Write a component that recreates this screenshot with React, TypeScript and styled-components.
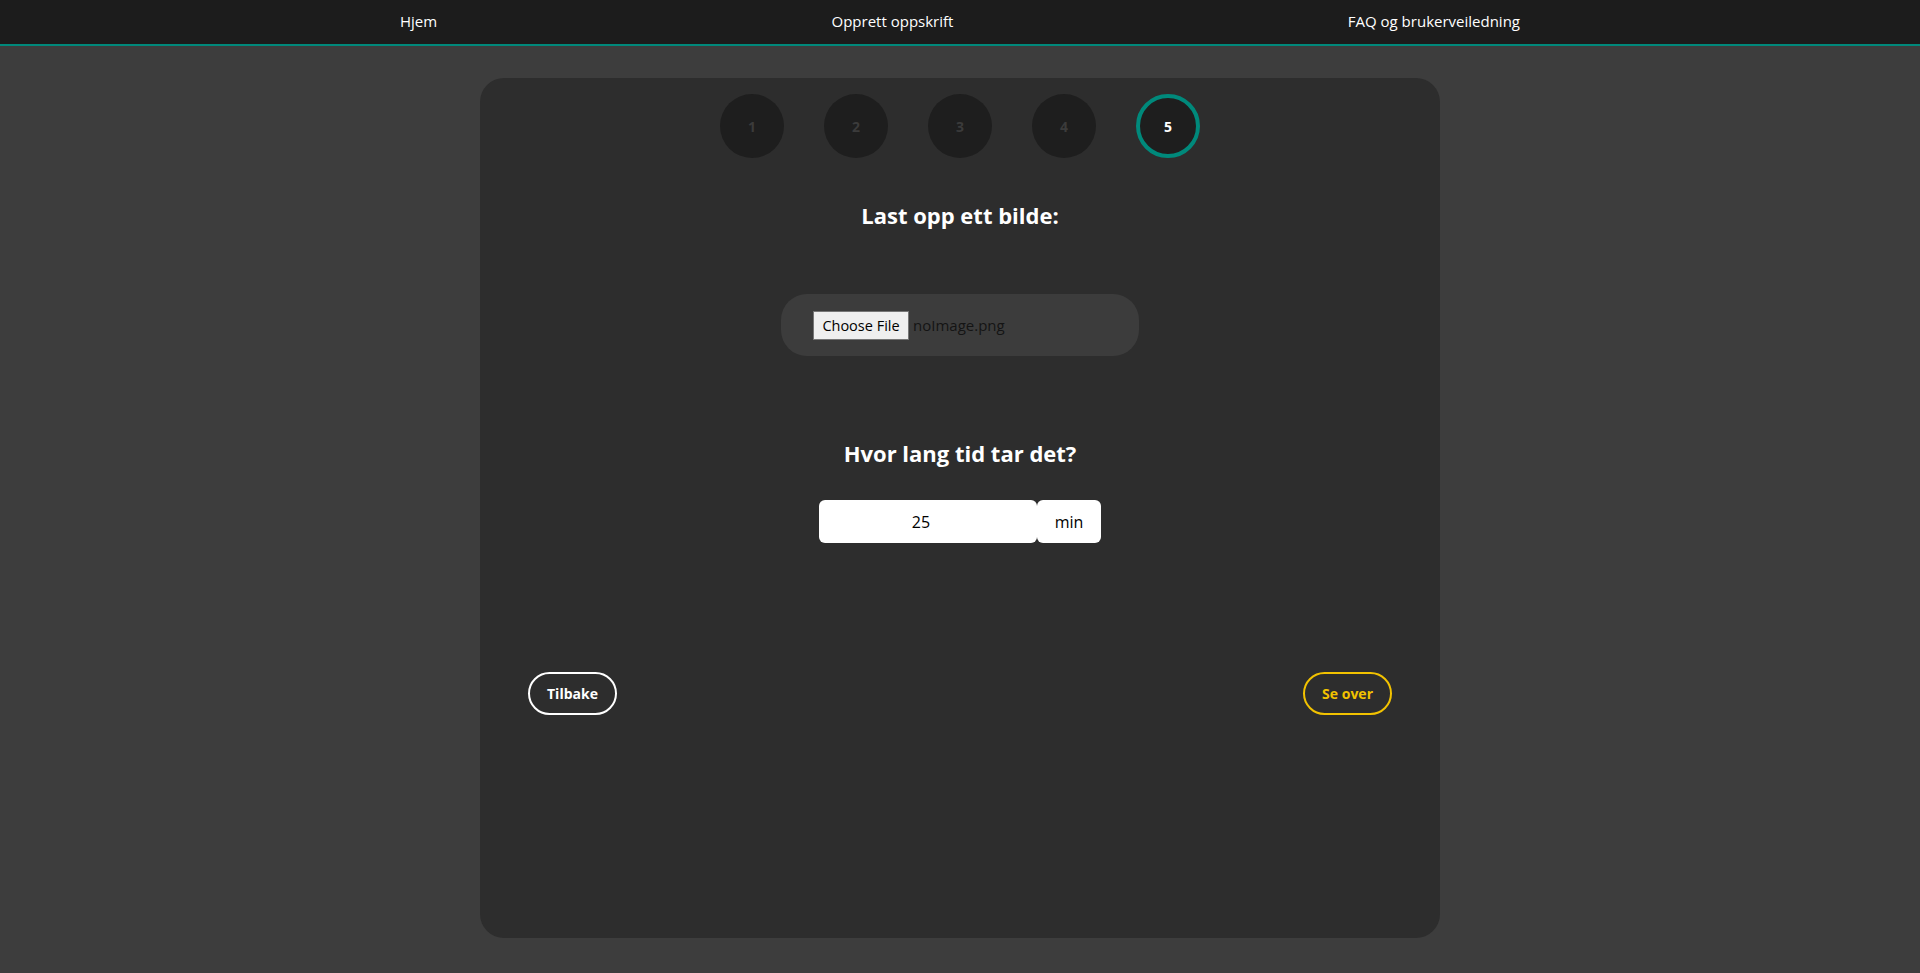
import React from "react";
import styled, { createGlobalStyle } from "styled-components";

const Global = createGlobalStyle`
  html, body { margin: 0; padding: 0; }
  body {
    background: #3d3d3d;
    font-family: "Open Sans", "Noto Sans", sans-serif;
    color: #fff;
    min-height: 973px;
  }
  * { box-sizing: border-box; }
`;

const Nav = styled.nav`
  height: 46px;
  background: #1c1c1c;
  border-bottom: 2px solid #00897b;
  display: flex;
  align-items: center;
  justify-content: space-between;
  padding: 0 400px;
`;

const NavLink = styled.a`
  color: #fff;
  font-size: 15px;
  text-decoration: none;
  line-height: 20px;
  margin-top: -2px;
`;

const Main = styled.main`
  display: flex;
  justify-content: center;
  padding-top: 32px;
`;

const Card = styled.section`
  width: 960px;
  height: 860px;
  background: #2d2d2d;
  border-radius: 24px;
  padding: 16px 48px;
  display: flex;
  flex-direction: column;
  align-items: center;
`;

const Steps = styled.div`
  display: flex;
  gap: 40px;
`;

const Step = styled.div<{ $active?: boolean }>`
  width: 64px;
  height: 64px;
  border-radius: 50%;
  background: #1e1e1e;
  border: ${(p) => (p.$active ? "4px solid #00897b" : "none")};
  color: ${(p) => (p.$active ? "#fff" : "#3b3b3b")};
  font-weight: 700;
  font-size: 14px;
  display: flex;
  align-items: center;
  justify-content: center;
`;

const Heading = styled.h2<{ $top: number }>`
  margin: ${(p) => p.$top}px 0 0;
  font-size: 22px;
  font-weight: 700;
  line-height: 32px;
  color: #fff;
`;

const FileBox = styled.div`
  margin-top: 63px;
  width: 358px;
  height: 62px;
  border-radius: 26px;
  background: #3c3c3c;
  display: flex;
  align-items: center;
  padding-left: 32px;
  gap: 4px;
`;

const FileButton = styled.span`
  height: 29px;
  width: 96px;
  background: #efefef;
  border: 1px solid #767676;
  color: #000;
  font-size: 14.5px;
  display: flex;
  align-items: center;
  justify-content: center;
  margin-top: 1px;
`;

const FileName = styled.span`
  color: #141414;
  font-size: 15px;
`;

const TimeRow = styled.div`
  margin-top: 31px;
  display: flex;
`;

const TimeInput = styled.div`
  width: 218px;
  height: 43px;
  background: #fff;
  border-radius: 6px;
  color: #000;
  font-size: 16px;
  display: flex;
  align-items: center;
  justify-content: center;
  padding-right: 14px;
`;

const Unit = styled.div`
  width: 64px;
  height: 43px;
  background: #fff;
  border-radius: 6px;
  color: #000;
  font-size: 16px;
  display: flex;
  align-items: center;
  justify-content: center;
`;

const Actions = styled.div`
  margin-top: 129px;
  width: 100%;
  display: flex;
  justify-content: space-between;
`;

const Button = styled.button<{ $color: string }>`
  height: 43px;
  padding: 0 17px;
  border-radius: 22px;
  border: 2px solid ${(p) => p.$color};
  background: transparent;
  color: ${(p) => p.$color};
  font-family: "Open Sans", "Noto Sans", sans-serif;
  font-weight: 700;
  font-size: 14px;
`;

export default function App() {
  return (
    <>
      <Global />
      <Nav>
        <NavLink>Hjem</NavLink>
        <NavLink>Opprett oppskrift</NavLink>
        <NavLink>FAQ og brukerveiledning</NavLink>
      </Nav>
      <Main>
        <Card>
          <Steps>
            {[1, 2, 3, 4, 5].map((n) => (
              <Step key={n} $active={n === 5}>
                {n}
              </Step>
            ))}
          </Steps>
          <Heading $top={41}>Last opp ett bilde:</Heading>
          <FileBox>
            <FileButton>Choose File</FileButton>
            <FileName>noImage.png</FileName>
          </FileBox>
          <Heading $top={81}>Hvor lang tid tar det?</Heading>
          <TimeRow>
            <TimeInput>25</TimeInput>
            <Unit>min</Unit>
          </TimeRow>
          <Actions>
            <Button $color="#ffffff">Tilbake</Button>
            <Button $color="#f2c200">Se over</Button>
          </Actions>
        </Card>
      </Main>
    </>
  );
}
